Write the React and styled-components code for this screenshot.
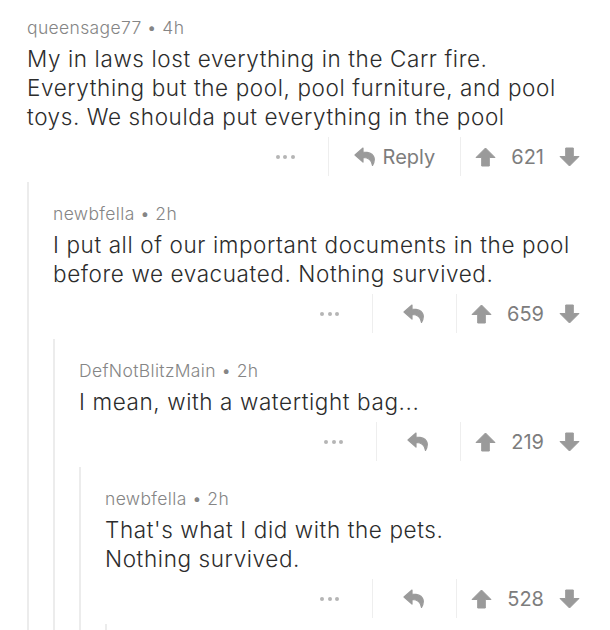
import React from "react";
import styled, { createGlobalStyle } from "styled-components";

const GlobalStyle = createGlobalStyle`
  body {
    margin: 0;
    background: #fff;
    font-family: Inter, Roboto, sans-serif;
  }
`;

const Page = styled.div`
  padding: 18px 26px 0 27px;
  height: 630px;
  overflow: hidden;
  box-sizing: border-box;
`;

const CommentBox = styled.div``;

const Meta = styled.div`
  font-size: 17.5px;
  line-height: 20px;
  letter-spacing: 0.35px;
  font-weight: 300;
  color: #858585;
  margin-bottom: 6px;
`;

const Body = styled.div`
  font-size: 22.5px;
  line-height: 29px;
  letter-spacing: 0.6px;
  font-weight: 350;
  color: #2c2c2c;
`;

const Actions = styled.div`
  display: flex;
  justify-content: flex-end;
  align-items: stretch;
  height: 39px;
  margin-top: 6px;
  padding-right: 4px;
`;

const Section = styled.div`
  display: flex;
  align-items: center;
  border-right: 1px solid #eeeeee;
  &:last-child {
    border-right: none;
  }
`;

const DotsSection = styled(Section)`
  padding-right: 33px;
  gap: 3.5px;
`;

const Dot = styled.span`
  width: 4px;
  height: 4px;
  border-radius: 50%;
  background: #b5b5b5;
`;

const ReplySection = styled(Section)`
  padding: 0 ${(p) => (p.$label ? 25 : 30)}px;
  gap: 6px;
  font-size: 20px;
  color: #7d7d7d;
`;

const VoteSection = styled(Section)`
  padding-left: 14px;
  gap: 15px;
  font-size: 20px;
  color: #7d7d7d;
`;

const Thread = styled.div`
  margin-top: 6px;
  border-left: 2px solid #ececec;
  padding: 22px 0 0 24px;
`;

const ReplyIcon = () => (
  <svg width="23" height="19" viewBox="0 0 23 19">
    <path
      d="M9 1 L1 8 L9 15 L9 10.5 C14 10.3 17.5 12 18.5 18.5 C22.5 11 20 5 9 5.2 Z"
      fill="#9a9a9a"
      stroke="#9a9a9a"
      strokeWidth="1.2"
      strokeLinejoin="round"
    />
  </svg>
);

const Arrow = ({ down }) => (
  <svg
    width="21"
    height="20"
    viewBox="0 0 21 20"
    style={down ? { transform: "rotate(180deg)" } : undefined}
  >
    <path
      d="M10.5 1 L20 10.5 L14.3 10.5 L14.3 19 L6.7 19 L6.7 10.5 L1 10.5 Z"
      fill="#9a9a9a"
      stroke="#9a9a9a"
      strokeWidth="1"
      strokeLinejoin="round"
    />
  </svg>
);

const Comment = ({ author, time, text, score, label, children }) => (
  <CommentBox>
    <Meta>
      {author} • {time}
    </Meta>
    <Body>{text}</Body>
    <Actions>
      <DotsSection>
        <Dot />
        <Dot />
        <Dot />
      </DotsSection>
      <ReplySection $label={label}>
        <ReplyIcon />
        {label && <span>Reply</span>}
      </ReplySection>
      <VoteSection>
        <Arrow />
        <span>{score}</span>
        <Arrow down />
      </VoteSection>
    </Actions>
    {children && <Thread>{children}</Thread>}
  </CommentBox>
);

export default function App() {
  return (
    <>
      <GlobalStyle />
      <Page>
        <Comment
          author="queensage77"
          time="4h"
          label
          score="621"
          text={
            <>
              My in laws lost everything in the Carr fire.
              <br />
              Everything but the pool, pool furniture, and pool
              <br />
              toys. We shoulda put everything in the pool
            </>
          }
        >
          <Comment
            author="newbfella"
            time="2h"
            score="659"
            text={
              <>
                I put all of our important documents in the pool
                <br />
                before we evacuated. Nothing survived.
              </>
            }
          >
            <Comment
              author="DefNotBlitzMain"
              time="2h"
              score="219"
              text="I mean, with a watertight bag..."
            >
              <Comment
                author="newbfella"
                time="2h"
                score="528"
                text={
                  <>
                    That's what I did with the pets.
                    <br />
                    Nothing survived.
                  </>
                }
              >
                <div style={{ height: 20 }} />
              </Comment>
            </Comment>
          </Comment>
        </Comment>
      </Page>
    </>
  );
}
